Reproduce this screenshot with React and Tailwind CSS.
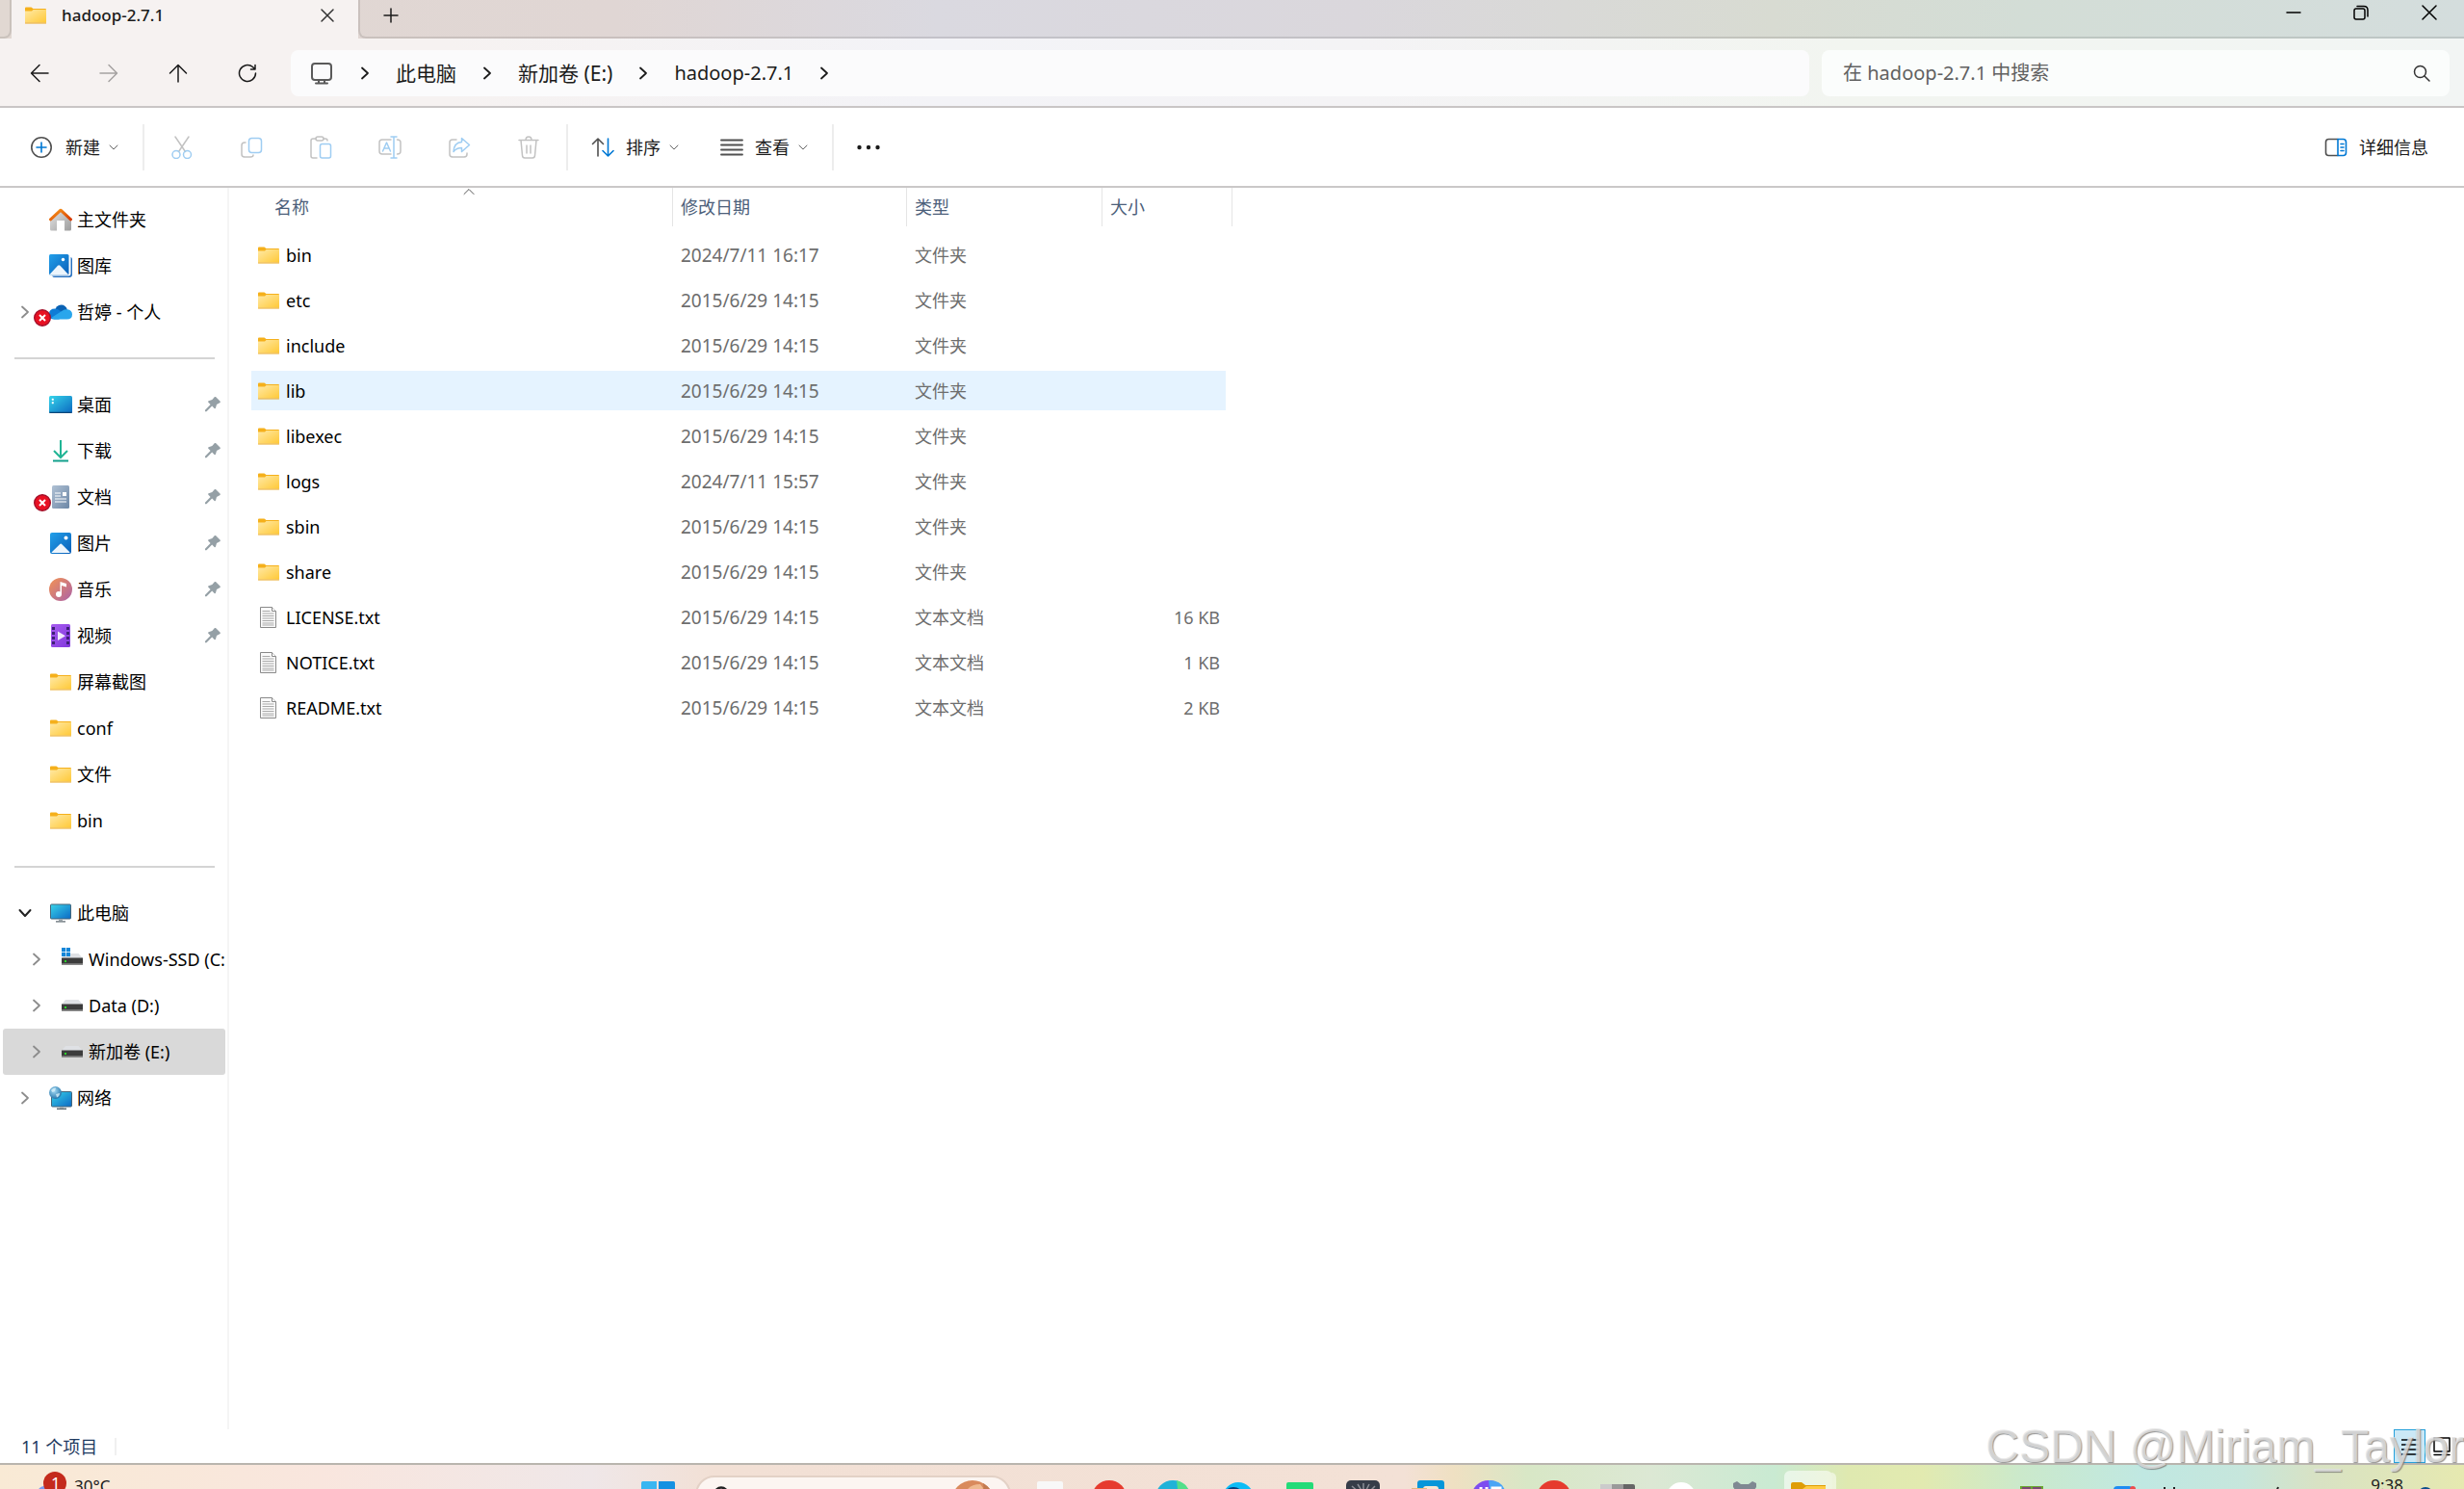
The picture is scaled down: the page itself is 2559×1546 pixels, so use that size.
import { clsx } from "clsx";

/* =========================
   DATA
========================= */
const PINNED = [
  { name: "桌面", icon: DesktopIcon, pinned: true },
  { name: "下载", icon: DownloadIcon, pinned: true },
  { name: "文档", icon: DocumentIcon, pinned: true, error: true },
  { name: "图片", icon: PictureIcon, pinned: true },
  { name: "音乐", icon: MusicIcon, pinned: true },
  { name: "视频", icon: VideoIcon, pinned: true },
  { name: "屏幕截图", icon: FolderIcon },
  { name: "conf", icon: FolderIcon },
  { name: "文件", icon: FolderIcon },
  { name: "bin", icon: FolderIcon },
];

const FILES = [
  { name: "bin", date: "2024/7/11 16:17" },
  { name: "etc", date: "2015/6/29 14:15" },
  { name: "include", date: "2015/6/29 14:15" },
  { name: "lib", date: "2015/6/29 14:15", hover: true },
  { name: "libexec", date: "2015/6/29 14:15" },
  { name: "logs", date: "2024/7/11 15:57" },
  { name: "sbin", date: "2015/6/29 14:15" },
  { name: "share", date: "2015/6/29 14:15" },
  { name: "LICENSE.txt", date: "2015/6/29 14:15", size: "16 KB" },
  { name: "NOTICE.txt", date: "2015/6/29 14:15", size: "1 KB" },
  { name: "README.txt", date: "2015/6/29 14:15", size: "2 KB" },
];

/* =========================
   LINE ICONS
========================= */
function Line({ w = 24, h = 24, sw = 2, className, children }) {
  return (
    <svg
      width={w}
      height={h}
      viewBox={`0 0 ${w} ${h}`}
      fill="none"
      stroke="currentColor"
      strokeWidth={sw}
      strokeLinecap="round"
      strokeLinejoin="round"
      className={clsx("shrink-0", className)}
    >
      {children}
    </svg>
  );
}

function ChevronRight({ className }) {
  return (
    <Line w={12} h={16} sw={1.8} className={className}>
      <path d="M3 2.500l6 5.500-6 5.500" />
    </Line>
  );
}

function ChevronDown() {
  return (
    <Line w={12} h={12} sw={1} className="text-[#666]">
      <path d="M2 4l4 4 4-4" />
    </Line>
  );
}

function Pin() {
  return (
    <svg width="18" height="18" viewBox="0 0 18 18" className="shrink-0" fill="#95a0a6">
      <path d="M10.500 1.500c.6-.6 1.400-.6 2 0l4 4c.6.600.4 1.400-.3 1.800l-3.200 1.700-1 3.500c-.1.700-.9.900-1.400.4l-2.400-2.300-5.700 5.600H1v-1.500l5.600-5.700-2.200-2.300c-.5-.5-.3-1.300.3-1.500l3.600-1.100z" />
    </svg>
  );
}

/* =========================
   COLOUR ICONS
========================= */
function FolderIcon() {
  return (
    <svg width="22" height="18" viewBox="0 0 22 18" className="shrink-0">
      <defs>
        <linearGradient id="folder" x1="0" y1="0" x2="1" y2="1">
          <stop offset="0" stopColor="#ffe9a6" />
          <stop offset="1" stopColor="#ffc937" />
        </linearGradient>
      </defs>
      <path d="M0 1.500Q0 .5 1 .5h5.500L8.500 2H21q1 0 1 1v3H0z" fill="#f5b01b" />
      <path d="M0 4.500h7L8.500 3H22v13.500H0z" fill="url(#folder)" />
      <path d="M0 16.500h22v.5q0 .5-.5.500H.5Q0 17.500 0 17z" fill="#e9a51c" />
    </svg>
  );
}

function TextFileIcon() {
  return (
    <svg width="22" height="22" viewBox="0 0 22 22" className="shrink-0">
      <path d="M2.500.5h12l4 4v17h-16z" fill="#fafafa" stroke="#8a8a8a" />
      <path d="M14.500.5v4h4" fill="#fff" stroke="#8a8a8a" />
      <path
        d="M4.500 4.500h8M4.500 7h12M4.500 9.500h12M4.500 12h12M4.500 14.500h12M4.500 17h12M4.500 19h12"
        stroke="#a9a9a9"
      />
    </svg>
  );
}

function HomeIcon() {
  return (
    <svg width="24" height="24" viewBox="0 0 24 24">
      <defs>
        <linearGradient id="wall" x1="0" y1="0" x2="1" y2="1">
          <stop offset="0" stopColor="#e6e6e6" />
          <stop offset="1" stopColor="#9c9c9c" />
        </linearGradient>
        <linearGradient id="roof" x1="0" y1="0" x2="1" y2="1">
          <stop offset="0" stopColor="#f99a1c" />
          <stop offset="1" stopColor="#d83b01" />
        </linearGradient>
      </defs>
      <path d="M1 11L12 2l11 9v11q0 1.500-1.500 1.500H16V13H8v10.500H2.500Q1 23.500 1 22z" fill="url(#wall)" />
      <path d="M1.500 11.800L12 2.200l10.500 9.600" fill="none" stroke="url(#roof)" strokeWidth="3" strokeLinejoin="round" strokeLinecap="round" />
    </svg>
  );
}

function BlueGradient({ id, from = "#22a0ea", to = "#0a5fb8" }) {
  return (
    <linearGradient id={id} x1="0" y1="0" x2="1" y2="1">
      <stop offset="0" stopColor={from} />
      <stop offset="1" stopColor={to} />
    </linearGradient>
  );
}

function GalleryIcon() {
  return (
    <svg width="24" height="24" viewBox="0 0 24 24">
      <defs>
        <BlueGradient id="gallery" />
      </defs>
      <path d="M3 22.500Q4 24 6 24h15q3 0 3-3V5q0-1.500-1.500-2V20q0 2.500-2.500 2.500z" fill="#2a72c0" />
      <rect width="20.500" height="21.500" rx="1.500" fill="url(#gallery)" />
      <path d="M.5 21L9 11.800q1.200-1.200 2.400 0L20 21q-.5.500-1 .5H1.500q-.6 0-1-.5z" fill="#edf5fc" />
      <circle cx="14.500" cy="5.500" r="1.700" fill="#fff" />
    </svg>
  );
}

function PictureIcon() {
  return (
    <svg width="22" height="22" viewBox="0 0 22 22">
      <defs>
        <BlueGradient id="picture" />
      </defs>
      <rect width="22" height="22" rx="2" fill="url(#picture)" />
      <path d="M1.500 20.500L10 12.200q1.200-1.200 2.400 0l8.200 8.300q-.6.500-1.100.5h-17q-.6 0-1-.5z" fill="#edf5fc" />
      <circle cx="16.500" cy="5.500" r="2" fill="#fff" />
    </svg>
  );
}

function CloudIcon() {
  return (
    <svg width="24" height="16" viewBox="0 0 24 16">
      <path d="M6 7Q7 .5 12.500.5 17.500.5 19 6l-7 4z" fill="#0a62b4" />
      <path d="M5.500 15.500Q0 15.500 0 10t6-5.500q3 0 5 2l8 5-9 4z" fill="#0f7cd6" />
      <path d="M4 15q-1-.7-1.500-1.300L14 6.500q2-1.500 5-1.200 5 .7 5 5.200 0 5-5.500 5H6q-1 0-2-.5z" fill="#29a6ec" />
    </svg>
  );
}

function DesktopIcon() {
  return (
    <svg width="24" height="18" viewBox="0 0 24 18">
      <defs>
        <BlueGradient id="desktop" from="#35d5ea" to="#0c68c0" />
      </defs>
      <rect width="24" height="18" rx="1.500" fill="url(#desktop)" />
      <path d="M0 16.800h24v.2q0 1-1.500 1h-21Q0 18 0 17z" fill="#0c4578" />
      <path d="M3 3h1.500v1.500H3zM3 6.500h1.500V8H3z" fill="#fff" stroke="#fff" strokeWidth=".5" />
    </svg>
  );
}

function DownloadIcon() {
  return (
    <svg width="24" height="24" viewBox="0 0 24 24" fill="none" strokeWidth="2">
      <path d="M12 1v17M5 12l7 7 7-7" stroke="#21b595" />
      <path d="M4 22.500h16" stroke="#13a08c" />
    </svg>
  );
}

function DocumentIcon() {
  return (
    <svg width="18" height="24" viewBox="0 0 18 24">
      <defs>
        <BlueGradient id="document" from="#b0c1d4" to="#6c87a6" />
      </defs>
      <rect width="18" height="24" rx="1.500" fill="url(#document)" />
      <path d="M3 8h6M3 11h6M3 14h12M3 17h12" stroke="#fff" strokeWidth="1.200" />
      <rect x="11" y="7" width="4" height="4" fill="#fff" />
    </svg>
  );
}

function MusicIcon() {
  return (
    <svg width="24" height="24" viewBox="0 0 24 24">
      <defs>
        <BlueGradient id="music" from="#f39353" to="#ab62a8" />
      </defs>
      <circle cx="12" cy="12" r="12" fill="url(#music)" />
      <circle cx="10" cy="17" r="3" fill="#fff" />
      <path d="M11.500 17V4l6.500 2v3.500L13 8v9z" fill="#fff" />
    </svg>
  );
}

function VideoIcon() {
  return (
    <svg width="20" height="24" viewBox="0 0 20 24">
      <defs>
        <BlueGradient id="video" from="#a85cf0" to="#8038dc" />
      </defs>
      <rect width="20" height="24" rx="1.500" fill="url(#video)" />
      <path
        d="M1 3h3v3H1zM1 8h3v3H1zM1 13h3v3H1zM1 18h3v3H1zM16 3h3v3h-3zM16 8h3v3h-3zM16 13h3v3h-3zM16 18h3v3h-3z"
        fill="#3f1f78"
      />
      <path d="M7 7.500l8 4.700-8 4.800z" fill="#f2eafc" />
    </svg>
  );
}

function ComputerIcon() {
  return (
    <svg width="22" height="20" viewBox="0 0 22 20">
      <defs>
        <BlueGradient id="computer" from="#38d4ea" to="#0c68c4" />
      </defs>
      <rect x=".5" y="1" width="21" height="15" rx="1" fill="url(#computer)" stroke="#466579" />
      <path d="M9 16.500h4v1.500H9z" fill="#9aa5ab" />
      <path d="M6 18.300h10v1.200H6z" fill="#56626a" />
    </svg>
  );
}

function DriveIcon({ windows }) {
  return (
    <svg width="22" height="20" viewBox="0 3 22 20" className="overflow-visible">
      <path d="M4 7h13.500l4.500 5H0z" fill="#dfe1e5" />
      <path d="M0 11.500h22v7H0z" fill="#3c3c3c" />
      <path d="M0 17.300h22V19H0z" fill="#8a8a8a" />
      <path d="M3 14h2v2H3z" fill="#2bd42b" />
      {windows && (
        <path d="M0 1h4.200v4.200H0zM5 1h4v4.200H5zM0 6h4.200v4H0zM5 6h4v4H5z" fill="#1486d8" />
      )}
    </svg>
  );
}

function NetworkIcon() {
  return (
    <svg width="24" height="24" viewBox="0 0 24 24">
      <defs>
        <BlueGradient id="network" from="#38d4ea" to="#0c68c4" />
        <radialGradient id="globe" cx=".4" cy=".35" r=".7">
          <stop offset="0" stopColor="#a5dcf5" />
          <stop offset="1" stopColor="#1f6ea6" />
        </radialGradient>
      </defs>
      <rect x="2.500" y="5.500" width="21" height="15.500" rx="1" fill="url(#network)" stroke="#466579" />
      <path d="M11 21h4v1.500h-4z" fill="#9aa5ab" />
      <path d="M8 22.600h10V24H8z" fill="#56626a" />
      <circle cx="6.500" cy="6.500" r="6.500" fill="url(#globe)" />
      <path d="M2 4q2-3 5-2.500L6 5 3.500 6zM7 8l4-1q0 3-3 4.500z" fill="#d8f0fa" opacity=".8" />
    </svg>
  );
}

function ErrorBadge() {
  return (
    <svg width="18" height="18" viewBox="0 0 18 18" className="absolute -left-4 top-[9px]">
      <circle cx="9" cy="9" r="8.300" fill="#e81123" stroke="#a3102a" strokeWidth="1.400" />
      <path d="M6 6l6 6M12 6l-6 6" stroke="#fff" strokeWidth="2" />
    </svg>
  );
}

/* =========================
   TITLE BAR
========================= */
function TitleBar() {
  return (
    <div className="flex h-10 bg-[linear-gradient(90deg,#e1d8d2,#e0d6d4_25%,#dad9e0_38%,#dad7dc_55%,#d8dbd2_72%,#d3ddd6_82%,#d4dddd)]">
      <div className="w-3 rounded-br-lg border-b-2 border-r-2 border-black/10" />
      <div className="flex w-[360px] items-center bg-[#f6f2f1] pb-2 pl-3.5 pr-6">
        <FolderIcon />
        <span className="ml-4 flex-1 text-[17px] font-medium leading-6 text-[#1b1b1b]">
          hadoop-2.7.1
        </span>
        <button aria-label="关闭标签页" className="text-[#333]">
          <Line w={16} h={16} sw={1.5}>
            <path d="M2 2l12 12M14 2L2 14" />
          </Line>
        </button>
      </div>
      <div className="flex flex-1 items-center justify-between rounded-bl-lg border-b-2 border-l-2 border-black/10 pb-1.5">
        <button aria-label="新标签页" className="ml-6 text-[#1b1b1b]">
          <Line w={16} h={16} sw={1.5}>
            <path d="M8 1v14M1 8h14" />
          </Line>
        </button>
        <div className="mb-1.5 flex text-black">
          <button aria-label="最小化" className="flex w-[70px] justify-center">
            <Line w={16} h={16} sw={1.5}>
              <path d="M1 8h14" />
            </Line>
          </button>
          <button aria-label="还原" className="flex w-[70px] justify-center">
            <Line w={16} h={16} sw={1.5}>
              <rect x="1" y="4" width="11" height="11" rx="2" />
              <path d="M4 1.500h7q4 0 4 4V12" />
            </Line>
          </button>
          <button aria-label="关闭" className="flex w-[72px] justify-center">
            <Line w={16} h={16} sw={1.5}>
              <path d="M1 1l14 14M15 1L1 15" />
            </Line>
          </button>
        </div>
      </div>
    </div>
  );
}

/* =========================
   ADDRESS BAR
========================= */
function NavButton({ label, disabled, children }) {
  return (
    <button
      aria-label={label}
      disabled={disabled}
      className={clsx(
        "flex h-12 w-12 items-center justify-center",
        disabled ? "text-[#a5a2a1]" : "text-[#1b1b1b]"
      )}
    >
      <Line w={20} h={20} sw={1.5}>
        {children}
      </Line>
    </button>
  );
}

function Crumb({ children, className }) {
  return (
    <div className="flex items-center">
      <a href="#" className={clsx("px-[26px] leading-7", className)}>
        {children}
      </a>
      <ChevronRight />
    </div>
  );
}

function AddressBar() {
  return (
    <div className="flex h-[72px] items-center border-b-2 border-[#c9c5c5] bg-[linear-gradient(90deg,#f6f2f1,#f6f2f1_18%,#f3f3f7_38%,#f4f3f5_55%,#f2f5f0_75%,#f2f5f4)] pt-0.5 pl-[17px] pr-[15px]">
      <div className="flex gap-6">
        <NavButton label="后退">
          <path d="M19 10H2M10 1.500L1.500 10l8.500 8.500" />
        </NavButton>
        <NavButton label="前进" disabled>
          <path d="M1 10h17M10 1.500l8.500 8.500-8.500 8.500" />
        </NavButton>
        <NavButton label="向上">
          <path d="M10 19V2M1.500 10L10 1.500l8.500 8.500" />
        </NavButton>
        <NavButton label="刷新">
          <path d="M18.500 10A8.500 8.500 0 1 1 15.500 3.500L18 6M18 1.500V6h-4.500" />
        </NavButton>
      </div>

      <nav className="ml-[21px] flex h-12 flex-1 items-center rounded-lg bg-[#fbfbfc] pl-[21px] text-[#1b1b1b]">
        <Line w={22} h={24} sw={2} className="text-[#5a5a5a]">
          <rect x="1" y="2" width="20" height="17" rx="3" />
          <path d="M8 19v3M14 19v3M5 22.500h12" />
        </Line>
        <ChevronRight className="ml-7" />
        <Crumb className="text-[21px]">此电脑</Crumb>
        <Crumb className="text-[21px]">新加卷 (E:)</Crumb>
        <Crumb className="text-[20px]">hadoop-2.7.1</Crumb>
      </nav>

      <div className="ml-[13px] flex h-12 w-[25.8%] shrink-0 items-center rounded-lg bg-[#fbfdfc] pl-[22px] pr-5">
        <input
          aria-label="搜索"
          placeholder="在 hadoop-2.7.1 中搜索"
          className="min-w-0 flex-1 bg-transparent text-[20px] leading-7 outline-none placeholder:text-[#616161]"
        />
        <Line w={18} h={18} sw={1.5} className="text-[#333]">
          <circle cx="7.500" cy="7.500" r="6" />
          <path d="M12 12l5 5" />
        </Line>
      </div>
    </div>
  );
}

/* =========================
   TOOLBAR
========================= */
function ToolIcon({ label, children }) {
  return (
    <button aria-label={label} disabled className="flex w-[72px] justify-center text-[#c2c2c2]">
      <Line sw={1.5}>{children}</Line>
    </button>
  );
}

function Divider({ className }) {
  return <div className={clsx("h-12 w-0.5 bg-[#ededed]", className)} />;
}

function Toolbar() {
  return (
    <div className="flex h-[83px] items-center border-b-2 border-[#cac8c8] bg-white pl-8 pr-[37px] text-[18px] leading-6 text-[#1b1b1b]">
      <button className="flex items-center">
        <Line w={22} h={22} sw={1.6} className="text-[#505050]">
          <circle cx="11" cy="11" r="10.200" />
          <path d="M11 6v10M6 11h10" className="stroke-[#0078d4]" />
        </Line>
        <span className="ml-3.5 mr-2">新建</span>
        <ChevronDown />
      </button>
      <Divider className="ml-6 mr-[3px]" />

      <ToolIcon label="剪切">
        <path d="M5 1l10.500 15.500M19 1L8.500 16.500" />
        <g className="stroke-[#9fcdf2]">
          <circle cx="6" cy="19.500" r="4" />
          <circle cx="17.500" cy="19.500" r="4" />
        </g>
      </ToolIcon>
      <ToolIcon label="复制">
        <path d="M6 7H5q-3 0-3 3v9q0 3 3 3h6q3 0 3-2" />
        <rect x="9.500" y="2.500" width="13" height="15" rx="3" className="stroke-[#9fcdf2]" />
      </ToolIcon>
      <ToolIcon label="粘贴">
        <path d="M7 3H4Q2 3 2 5v16q0 2 2 2h4M15 3h2q2 0 2 2" />
        <rect x="7" y="1" width="8" height="4" rx="2" />
        <rect x="11.500" y="8.500" width="11" height="14.500" rx="2" className="stroke-[#9fcdf2]" />
      </ToolIcon>
      <ToolIcon label="重命名">
        <path d="M13 4H4Q1 4 1 7v9q0 3 3 3h9M19.500 4q3.500 0 3.500 3v9q0 3-3.500 3" />
        <path d="M13 1h6M13 23h6M16 1v22M4.500 16L8.500 7l4 9M6 13h5" className="stroke-[#9fcdf2]" />
      </ToolIcon>
      <ToolIcon label="共享">
        <path d="M9 4H5Q2 4 2 7v12q0 3 3 3h12q3 0 3-3v-1" />
        <path
          d="M14.500 2.500l8 7-8 7v-4q-5.500 0-8.500 4 .5-9.500 8.500-10z"
          className="stroke-[#9fcdf2]"
        />
      </ToolIcon>
      <ToolIcon label="删除">
        <path d="M2 4.500h20M9 4.500Q9 1 12 1t3 3.500M4 4.500l1.500 16q.2 2.500 2.500 2.500h8q2.300 0 2.500-2.500L20 4.500M10 10v8M14 10v8" />
      </ToolIcon>

      <Divider className="ml-[3px] mr-6" />
      <button className="flex items-center">
        <Line sw={1.6} className="text-[#505050]">
          <path d="M7 21V3M1.500 8.500L7 3l5.500 5.500" />
          <path d="M17.500 3v18M12 15.500l5.500 5.500 5.500-5.500" className="stroke-[#0078d4]" />
        </Line>
        <span className="ml-3 mr-2">排序</span>
        <ChevronDown />
      </button>
      <button className="ml-[42px] flex items-center">
        <Line sw={1.8} className="text-[#505050]">
          <path d="M1 4.500h22M1 9.500h22M1 14.500h22M1 19.500h22" />
        </Line>
        <span className="ml-3 mr-2">查看</span>
        <ChevronDown />
      </button>
      <Divider className="ml-6 mr-6" />
      <button aria-label="查看更多">
        <Line className="text-[#1b1b1b]">
          <g fill="currentColor" stroke="none">
            <circle cx="2.500" cy="12" r="2.200" />
            <circle cx="12" cy="12" r="2.200" />
            <circle cx="21.500" cy="12" r="2.200" />
          </g>
        </Line>
      </button>

      <button className="ml-auto flex items-center">
        <Line sw={1.6} className="text-[#505050]">
          <path d="M14 3.500H4.500q-3 0-3 3v11q0 3 3 3H14" />
          <path
            d="M14 3.500h5.500q3 0 3 3v11q0 3-3 3H14zM17 8.500h3M17 12h3M17 15.500h3"
            className="stroke-[#0078d4]"
          />
        </Line>
        <span className="ml-3">详细信息</span>
      </button>
    </div>
  );
}

/* =========================
   SIDEBAR
========================= */
function SideItem({ name, icon: Icon, chevron, depth, pinned, error, active, windows }) {
  return (
    <li
      className={clsx(
        "flex h-12 items-center rounded-[3px]",
        depth ? "pl-6" : "pl-3",
        active && "bg-[#d9d9d9]"
      )}
    >
      <span className="flex w-[22px] shrink-0 justify-center">
        {chevron === "right" && <ChevronRight className="text-[#8c8c8c]" />}
        {chevron === "down" && (
          <Line w={16} h={12} className="text-[#222]">
            <path d="M2.500 3L8 9l5.500-6" />
          </Line>
        )}
      </span>
      <span className="relative ml-3.5 flex h-6 w-6 shrink-0 items-center justify-center">
        <Icon windows={windows} />
        {error && <ErrorBadge />}
      </span>
      <a href="#" className="ml-[5px] flex-1 overflow-hidden whitespace-nowrap text-[18px] leading-6">
        {name}
      </a>
      {pinned && (
        <span className="mr-1">
          <Pin />
        </span>
      )}
    </li>
  );
}

function Separator() {
  return (
    <li className="flex h-12 items-center pl-3 pr-[11px]">
      <div className="h-0.5 w-full bg-[#d4d4d4]" />
    </li>
  );
}

function Sidebar() {
  return (
    <aside className="w-[238px] shrink-0 border-r-2 border-[#f5f5f5] pl-[3px] pr-0.5 pt-[9px] text-black">
      <ul>
        <SideItem name="主文件夹" icon={HomeIcon} />
        <SideItem name="图库" icon={GalleryIcon} />
        <SideItem name="哲婷 - 个人" icon={CloudIcon} chevron="right" error />
        <Separator />
        {PINNED.map((item) => (
          <SideItem key={item.name} {...item} />
        ))}
        <Separator />
        <SideItem name="此电脑" icon={ComputerIcon} chevron="down" />
        <SideItem name="Windows-SSD (C:)" icon={DriveIcon} chevron="right" depth windows />
        <SideItem name="Data (D:)" icon={DriveIcon} chevron="right" depth />
        <SideItem name="新加卷 (E:)" icon={DriveIcon} chevron="right" depth active />
        <SideItem name="网络" icon={NetworkIcon} chevron="right" />
      </ul>
    </aside>
  );
}

/* =========================
   FILE LIST
========================= */
function FileTable() {
  return (
    <table className="-mt-1.5 ml-[23px] w-[1012px] table-fixed border-separate border-spacing-x-0 border-spacing-y-1.5 self-start text-left">
      <thead className="text-[18px] leading-6 text-[#4c607a]">
        <tr className="h-[43px] align-top">
          <th className="relative w-[438px] p-0 font-normal">
            <div className="flex h-10 items-center border-r border-[#e5e5e5] pl-6">名称</div>
            <Line w={12} h={8} sw={1} className="absolute left-[220px] top-0 text-[#555]">
              <path d="M1 6.500l5-5 5 5" />
            </Line>
          </th>
          <th className="w-[243px] p-0 font-normal">
            <div className="flex h-10 items-center border-r border-[#e5e5e5] pl-2">修改日期</div>
          </th>
          <th className="w-[203px] p-0 font-normal">
            <div className="flex h-10 items-center border-r border-[#e5e5e5] pl-2">类型</div>
          </th>
          <th className="p-0 font-normal">
            <div className="flex h-10 w-[135px] items-center border-r border-[#e5e5e5] pl-2">大小</div>
          </th>
        </tr>
      </thead>
      <tbody className="text-[18px] leading-6 text-[#6d6d6d]">
        {FILES.map((file) => (
          <tr key={file.name} className={clsx("h-[41px]", file.hover && "bg-[#e5f3ff]")}>
            <td className="p-0">
              <div className="flex items-center gap-[7px] pl-[7px] text-black">
                {file.size ? <TextFileIcon /> : <FolderIcon />}
                <span>{file.name}</span>
              </div>
            </td>
            <td className="p-0 pl-2 text-[19px]">{file.date}</td>
            <td className="p-0 pl-2">{file.size ? "文本文档" : "文件夹"}</td>
            <td className="p-0 pr-1.5 text-right">{file.size}</td>
          </tr>
        ))}
      </tbody>
    </table>
  );
}

/* =========================
   STATUS BAR
========================= */
function StatusBar() {
  return (
    <footer className="relative flex h-[37px] items-center border-b-2 border-[#b9b5ae] pl-[22px] text-[18px] leading-6 text-[#1f3a5f]">
      <span>11 个项目</span>
      <div className="ml-[18px] h-[18px] w-0.5 bg-[#f0f0f0]" />
      <div className="ml-auto flex h-full items-center pr-3.5 text-black">
        <button
          aria-label="详细信息视图"
          className="flex h-full w-[33px] items-center justify-center border border-[#26a0da] bg-[#cbe8f6]"
        >
          <Line w={18} h={18} sw={1.5}>
            <path d="M0 2h18M0 7h18M0 12h18M0 17h18" />
          </Line>
        </button>
        <button aria-label="大图标视图" className="ml-2">
          <Line w={18} h={20} sw={1.5}>
            <rect x="1" y="1" width="16" height="14" />
            <path d="M1 18.500h16" />
          </Line>
        </button>
      </div>
      <div className="pointer-events-none absolute right-0 top-0 z-10 whitespace-nowrap font-['Liberation_Sans',sans-serif] text-[48px] leading-9 text-[#e4e4e4]/80 [text-shadow:1px_1px_1px_rgba(110,110,110,0.75)]">
        CSDN @Miriam_Taylor
      </div>
    </footer>
  );
}

/* =========================
   TASKBAR
========================= */
function AppSlot({ children, active }) {
  return (
    <div className="flex w-[66px] shrink-0 justify-center">
      <div
        className={clsx(
          "mt-1.5 flex h-12 w-[50px] justify-center rounded-md",
          active && "bg-white/55 shadow-[5px_1px_0_-1px_rgba(255,255,255,0.5)]"
        )}
      >
        <svg width="36" height="36" viewBox="0 0 36 36" className="mt-2.5">
          {children}
        </svg>
      </div>
    </div>
  );
}

function Taskbar() {
  return (
    <div className="flex h-[25px] shrink-0 items-start overflow-hidden bg-[linear-gradient(90deg,#f9ead5,#f9e6de_13%,#efe7e8_24%,#f2e0d5_29%,#f3e1d6_57%,#efe0c2_59%,#d8e7c6_62%,#dce8d4_67%,#c9ead2_72%,#dfe9b0_75%,#e2eab0_78%,#cbe9cb_82%,#c0e8e2_87%,#c6e6dc_91%,#d8e2c4_94%,#e6e9b0)]">
      <div className="flex w-[666px] shrink-0">
        <svg width="36" height="30" viewBox="0 0 36 30" className="ml-[37px] mt-[7px]">
          <circle cx="9" cy="22" r="7" fill="#7b9cf0" />
          <circle cx="20" cy="12" r="12" fill="#c42b1c" />
          <text x="16" y="18" fontSize="17" fill="#fff">
            1
          </text>
        </svg>
        <span className="ml-1 mt-2.5 text-[17px] leading-6 text-[#1b1b1b]">30°C</span>
      </div>

      <svg width="36" height="36" viewBox="0 0 36 36" className="mt-[17px] shrink-0">
        <path d="M0 1.500Q0 0 1.500 0H16v16H0z" fill="#38b6f1" />
        <path d="M18 0h15.500Q35 0 35 1.500V16H18z" fill="#1491e2" />
      </svg>

      <div className="ml-5 mt-[11px] flex h-12 w-[328px] shrink-0 rounded-[20px] border-2 border-[#e3d1c6] bg-[#fcf5f1] pl-4">
        <Line w={18} h={18} sw={2.5} className="mt-[9px] text-[#222]">
          <circle cx="9" cy="8" r="6.500" />
        </Line>
        <span className="ml-[22px] mt-2 text-[18px] leading-7 text-[#444]">搜索</span>
        <svg width="44" height="44" viewBox="0 0 44 44" className="ml-auto mr-4 mt-[3px]">
          <circle cx="22" cy="22" r="22" fill="#d98a5c" />
          <path d="M12 22Q14 4 30 4l3 4-4 14z" fill="#efb98f" />
          <path d="M33 3l2 19h9Q44 9 33 3z" fill="#c27a50" />
        </svg>
      </div>

      <div className="ml-[3px] flex">
        <AppSlot>
          <rect x="9" y="1" width="27" height="30" rx="2" fill="#f8f8f8" />
        </AppSlot>
        <AppSlot>
          <circle cx="18" cy="18" r="18" fill="#e63b2e" />
        </AppSlot>
        <AppSlot>
          <circle cx="18" cy="18" r="18" fill="#21b2d8" />
          <path d="M22 0q14 4 14 18H24z" fill="#53df8a" />
          <path d="M6 14q8-9 18-2v8H6z" fill="#1490c8" />
        </AppSlot>
        <AppSlot>
          <circle cx="20" cy="18" r="16" fill="#0cbcf6" />
          <circle cx="15" cy="18" r="11" fill="#063e7c" />
        </AppSlot>
        <AppSlot>
          <rect x="4" y="2" width="28" height="30" rx="2" fill="#23db78" />
        </AppSlot>
        <AppSlot>
          <rect width="35" height="36" rx="5" fill="#363c48" />
          <path d="M6 6l9 8M12 4l5 8M18 3v9M24 4l-4 8M30 6l-8 8" stroke="#8c8f96" strokeWidth="1.500" />
        </AppSlot>
        <AppSlot>
          <rect x="8" y="0" width="28" height="30" rx="3" fill="#0596d9" />
          <rect x="14" y="6" width="16" height="14" rx="3" fill="#f5e6d2" />
          <path d="M2 8h16v4H2z" fill="#e5b77f" />
        </AppSlot>
        <AppSlot>
          <circle cx="16" cy="18" r="18" fill="#7d4df0" />
          <path d="M16 0q18 0 18 18H18z" fill="#4aa5f5" />
          <path d="M8 7v6M14 7v6M20 12V8h8v4" stroke="#fff" strokeWidth="3" fill="none" />
        </AppSlot>
        <AppSlot>
          <circle cx="18" cy="18" r="18" fill="#e63b2e" />
        </AppSlot>
        <AppSlot>
          <path d="M0 4h12v20H0z" fill="#cbcbcb" />
          <path d="M12 4h12v20H12z" fill="#9a9a9a" />
          <path d="M24 4h10q2 0 2 2v18H24z" fill="#666" />
        </AppSlot>
        <AppSlot>
          <circle cx="18" cy="17" r="15" fill="#fff" />
        </AppSlot>
        <AppSlot>
          <path d="M6 3l4-2 4 3h8l4-3 4 2v4l-2 3v12H8V10L6 7z" fill="#7f8992" />
        </AppSlot>
        <AppSlot active>
          <path d="M0 4q0-2 2-2h9l4 3h21v5H0z" fill="#df9d05" />
          <path d="M0 9h12l4-3h20v14H0z" fill="#ffcb42" />
        </AppSlot>
      </div>

      <div className="ml-auto flex pr-8">
        <svg width="120" height="12" viewBox="0 0 120 12" className="mr-[29px] mt-[22px] shrink-0">
          <path d="M0 0h24v12H0z" fill="#6ba52f" />
          <path d="M2 1h9v9H2zM13 1h9v9h-9z" fill="#7b4a74" />
          <rect x="97" y="0" width="20" height="14" rx="4" fill="#1f8cf2" />
          <circle cx="117" cy="3" r="3" fill="#ec4b4b" />
        </svg>
        <svg width="122" height="12" viewBox="0 0 122 12" className="mr-[93px] mt-[22px] shrink-0">
          <path d="M1 1v11M11 1v11M119 1l-3 8" stroke="#222" strokeWidth="2" />
        </svg>
        <span className="mt-[9px] text-[17px] leading-6 text-[#1b1b1b]">9:38</span>
        <svg width="16" height="16" viewBox="0 0 16 16" className="ml-[15px] mt-[23px]">
          <circle cx="8" cy="8" r="8" fill="#0b4c8c" />
        </svg>
      </div>
    </div>
  );
}

export default function App() {
  return (
    <div className="flex min-h-screen flex-col bg-white font-['Noto_Sans','Noto_Sans_CJK_SC',sans-serif]">
      <TitleBar />
      <AddressBar />
      <Toolbar />
      <main className="flex flex-1">
        <Sidebar />
        <FileTable />
      </main>
      <StatusBar />
      <Taskbar />
    </div>
  );
}
